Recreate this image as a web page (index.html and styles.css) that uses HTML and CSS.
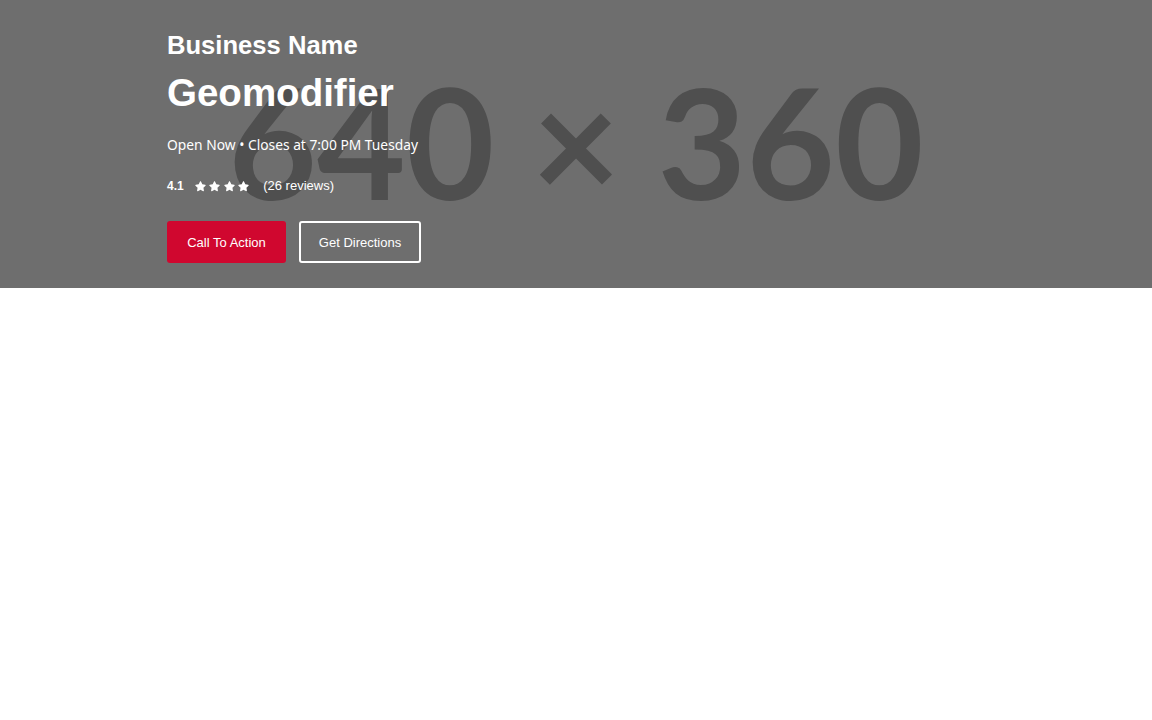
FILE: index.html
```html
<!DOCTYPE html>
<html lang="en">
<head>
<meta charset="utf-8">
<title>Geomodifier</title>
<link rel="stylesheet" href="styles.css">
</head>
<body>
<section class="hero">
  <div class="hero-bg" aria-hidden="true"><span class="placeholder">640 × 360</span></div>
  <div class="hero-inner">
    <h2 class="biz-name">Business Name</h2>
    <h1 class="geo">Geomodifier</h1>
    <p class="hours">Open Now • Closes at 7:00 PM Tuesday</p>
    <div class="rating">
      <span class="score">4.1</span>
      <span class="stars">
        <svg viewBox="0 0 24 24"><path d="M12 2.2c.4 0 .7.2.9.6l2.4 5 5.4.8c.9.1 1.2 1.2.6 1.8l-3.9 3.8.9 5.4c.2.9-.8 1.5-1.5 1.1L12 18.1l-4.8 2.6c-.8.4-1.7-.2-1.5-1.1l.9-5.4-3.9-3.8c-.6-.6-.3-1.7.6-1.8l5.4-.8 2.4-5c.2-.4.5-.6.9-.6z"/></svg>
        <svg viewBox="0 0 24 24"><path d="M12 2.2c.4 0 .7.2.9.6l2.4 5 5.4.8c.9.1 1.2 1.2.6 1.8l-3.9 3.8.9 5.4c.2.9-.8 1.5-1.5 1.1L12 18.1l-4.8 2.6c-.8.4-1.7-.2-1.5-1.1l.9-5.4-3.9-3.8c-.6-.6-.3-1.7.6-1.8l5.4-.8 2.4-5c.2-.4.5-.6.9-.6z"/></svg>
        <svg viewBox="0 0 24 24"><path d="M12 2.2c.4 0 .7.2.9.6l2.4 5 5.4.8c.9.1 1.2 1.2.6 1.8l-3.9 3.8.9 5.4c.2.9-.8 1.5-1.5 1.1L12 18.1l-4.8 2.6c-.8.4-1.7-.2-1.5-1.1l.9-5.4-3.9-3.8c-.6-.6-.3-1.7.6-1.8l5.4-.8 2.4-5c.2-.4.5-.6.9-.6z"/></svg>
        <svg viewBox="0 0 24 24"><path d="M12 2.2c.4 0 .7.2.9.6l2.4 5 5.4.8c.9.1 1.2 1.2.6 1.8l-3.9 3.8.9 5.4c.2.9-.8 1.5-1.5 1.1L12 18.1l-4.8 2.6c-.8.4-1.7-.2-1.5-1.1l.9-5.4-3.9-3.8c-.6-.6-.3-1.7.6-1.8l5.4-.8 2.4-5c.2-.4.5-.6.9-.6z"/></svg>
      </span>
      <span class="reviews">(26 reviews)</span>
    </div>
    <div class="actions">
      <a class="btn btn-primary" href="#">Call To Action</a>
      <a class="btn btn-outline" href="#">Get Directions</a>
    </div>
  </div>
</section>
</body>
</html>
```

FILE: styles.css
```css
* { box-sizing: border-box; }
html, body { margin: 0; padding: 0; background: #fff; }
body { font-family: "Liberation Sans", Arial, sans-serif; color: #fff; }

.hero {
  position: relative;
  height: 288px;
  background: #6e6e6e;
  overflow: hidden;
}
.hero-bg {
  position: absolute;
  inset: 0 0 6px 0;
  display: flex;
  align-items: center;
  justify-content: center;
}
.placeholder {
  font-family: Lato, sans-serif;
  font-weight: 700;
  font-size: 153px;
  color: #4f4f4f;
  line-height: 1;
  white-space: nowrap;
}
.hero-inner {
  position: relative;
  width: 818px;
  margin: 0 auto;
  padding-top: 30px;
}
.biz-name {
  margin: 0;
  font-size: 25.6px;
  font-weight: 700;
  line-height: 30px;
}
.geo {
  margin: 10px 0 0;
  font-size: 38.5px;
  font-weight: 700;
  line-height: 46px;
}
.hours {
  margin: 19px 0 0;
  font-family: "Noto Sans", sans-serif;
  font-size: 13.8px;
  line-height: 20px;
}
.rating {
  margin-top: 23px;
  display: flex;
  align-items: center;
  font-size: 13px;
  line-height: 16px;
}
.score { font-weight: 700; font-size: 12px; }
.stars { display: flex; gap: 1.5px; margin-left: 10px; }
.stars svg { width: 13px; height: 13px; fill: #fff; }
.reviews { margin-left: 13px; }
.actions {
  margin-top: 27px;
  display: flex;
  gap: 13px;
}
.btn {
  display: inline-flex;
  align-items: center;
  justify-content: center;
  height: 42px;
  padding: 0 20px;
  font-size: 13px;
  color: #fff;
  text-decoration: none;
  border-radius: 3px;
  white-space: nowrap;
}
.btn-primary { background: #d0072f; width: 119px; }
.btn-outline { border: 2px solid #fff; width: 122px; padding: 0 18px; }
```
